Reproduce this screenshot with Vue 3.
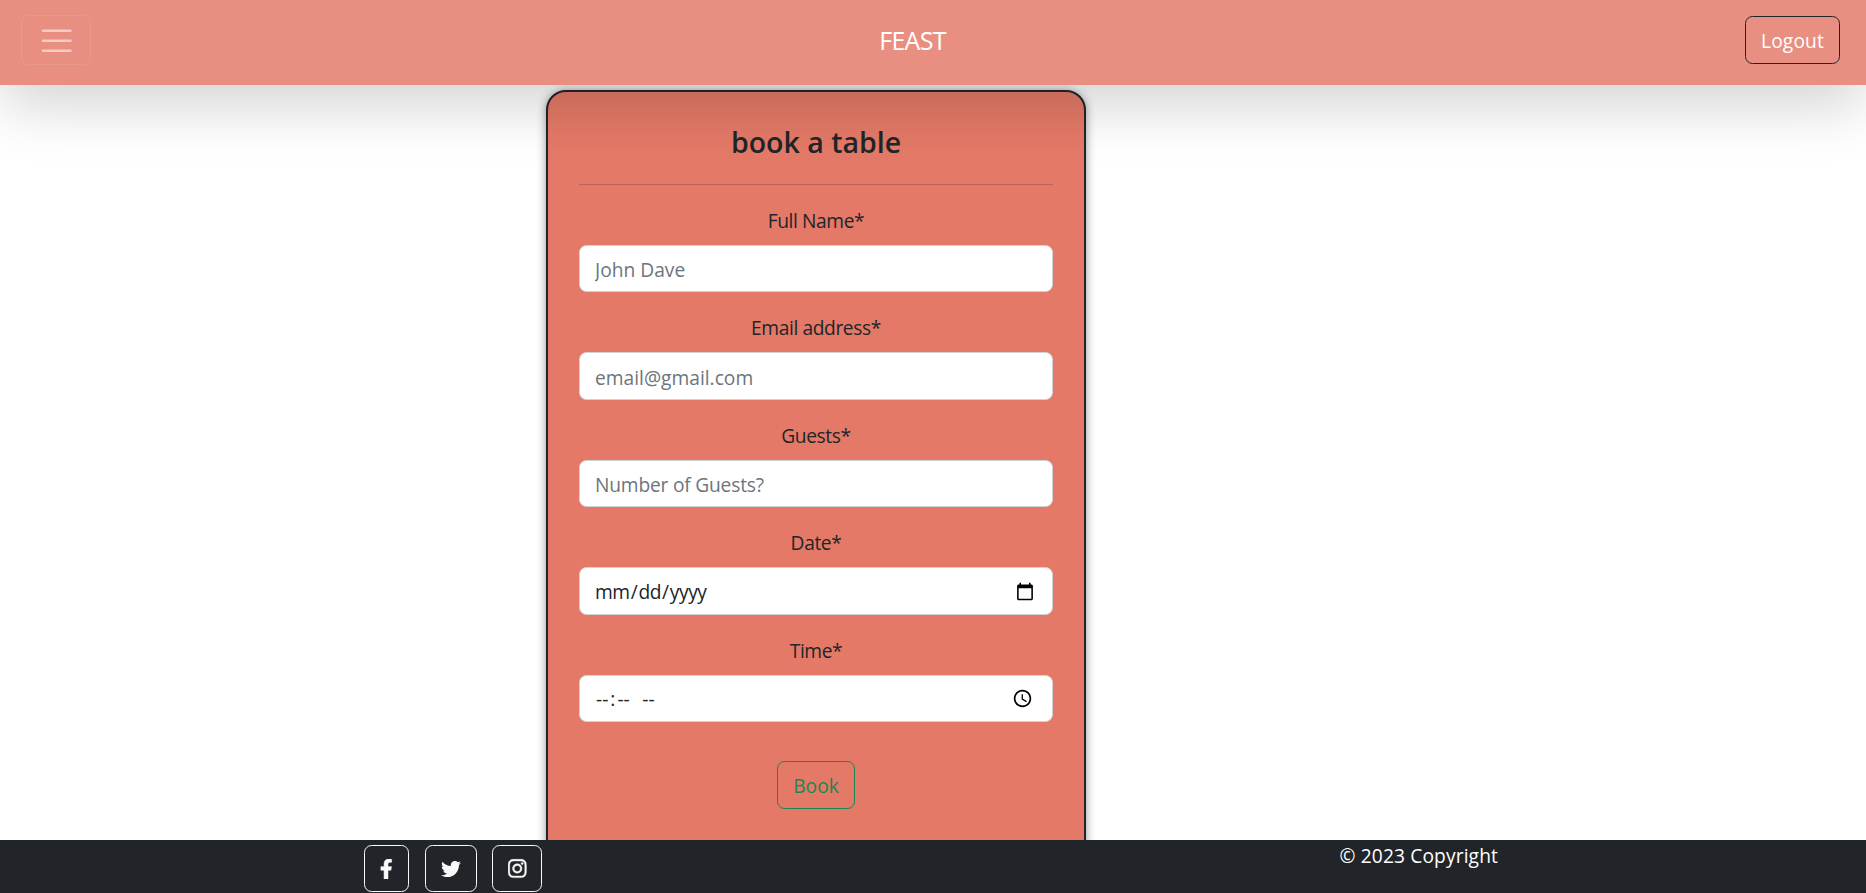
<script setup>
const fields = [
  { id: 'name', label: 'Full Name*', type: 'text', placeholder: 'John Dave' },
  { id: 'email', label: 'Email address*', type: 'email', placeholder: 'email@gmail.com' },
  { id: 'guests', label: 'Guests*', type: 'text', placeholder: 'Number of Guests?' },
  { id: 'date', label: 'Date*', type: 'date' },
  { id: 'time', label: 'Time*', type: 'time' },
]
</script>

<template>
  <div class="page">
    <header class="navbar">
      <button class="toggler" aria-label="Menu">
        <svg viewBox="0 0 30 30" width="37.5" height="37.5">
          <path d="M4 7h22M4 15h22M4 23h22" fill="none" stroke="rgba(255,255,255,.55)" stroke-width="2" stroke-linecap="round" stroke-miterlimit="10" />
        </svg>
      </button>
      <a class="brand">FEAST</a>
      <button class="btn logout">Logout</button>
    </header>

    <main class="main">
      <form class="card" @submit.prevent>
        <h3 class="title">book a table</h3>
        <hr class="rule" />
        <div v-for="f in fields" :key="f.id" class="field">
          <label :for="f.id" class="label">{{ f.label }}</label>
          <input :id="f.id" :class="['control', 'control-' + f.id]" :type="f.type" :placeholder="f.placeholder" />
        </div>
        <button class="btn book">Book</button>
      </form>
    </main>

    <footer class="footer">
      <div class="social">
        <a class="btn icon facebook" aria-label="Facebook">
          <svg viewBox="0 0 320 512" width="12.5" height="20"><path fill="currentColor" stroke="currentColor" stroke-width="14" d="M279.14 288l14.22-92.66h-88.91v-60.13c0-25.35 12.42-50.06 52.24-50.06h40.42V6.26S260.43 0 225.36 0c-73.22 0-121.08 44.38-121.08 124.72v70.62H22.89V288h81.39v224h100.17V288z" /></svg>
        </a>
        <a class="btn icon twitter" aria-label="Twitter">
          <svg viewBox="0 0 512 512" width="20" height="20"><path fill="currentColor" d="M459.37 151.716c.325 4.548.325 9.097.325 13.645 0 138.72-105.583 298.558-298.558 298.558-59.452 0-114.68-17.219-161.137-47.106 8.447.974 16.568 1.299 25.34 1.299 49.055 0 94.213-16.568 130.274-44.832-46.132-.975-84.792-31.188-98.112-72.772 6.498.974 12.995 1.624 19.818 1.624 9.421 0 18.843-1.3 27.614-3.573-48.081-9.747-84.143-51.98-84.143-102.985v-1.299c13.969 7.797 30.214 12.67 47.431 13.319-28.264-18.843-46.781-51.005-46.781-87.391 0-19.492 5.197-37.36 14.294-52.954 51.655 63.675 129.3 105.258 216.365 109.807-1.624-7.797-2.599-15.918-2.599-24.04 0-57.828 46.782-104.934 104.934-104.934 30.213 0 57.502 12.67 76.67 33.137 23.715-4.548 46.456-13.32 66.599-25.34-7.798 24.366-24.366 44.833-46.132 57.827 21.117-2.273 41.584-8.122 60.426-16.243-14.292 20.791-32.161 39.308-52.628 54.253z" /></svg>
        </a>
        <a class="btn icon instagram" aria-label="Instagram">
          <svg viewBox="0 0 448 512" width="18.5" height="21"><path fill="currentColor" stroke="currentColor" stroke-width="10" d="M224.1 141c-63.6 0-114.9 51.3-114.9 114.9s51.3 114.9 114.9 114.9S339 319.500 339 255.900 287.700 141 224.100 141zm0 189.600c-41.100 0-74.700-33.500-74.700-74.700s33.500-74.700 74.700-74.700 74.700 33.500 74.700 74.700-33.600 74.700-74.700 74.700zm146.400-194.300c0 14.900-12 26.800-26.800 26.800-14.900 0-26.800-12-26.800-26.800s12-26.800 26.800-26.800 26.800 12 26.800 26.800zm76.100 27.200c-1.700-35.900-9.900-67.700-36.200-93.900-26.200-26.200-58-34.400-93.900-36.200-37-2.100-147.900-2.100-184.900 0-35.800 1.700-67.600 9.900-93.900 36.100s-34.400 58-36.200 93.900c-2.100 37-2.100 147.900 0 184.900 1.700 35.900 9.900 67.700 36.200 93.900s58 34.400 93.900 36.200c37 2.100 147.900 2.100 184.900 0 35.900-1.700 67.700-9.900 93.900-36.200 26.200-26.200 34.400-58 36.200-93.900 2.100-37 2.100-147.800 0-184.800zM398.800 388c-7.800 19.600-22.900 34.700-42.600 42.600-29.500 11.700-99.500 9-132.100 9s-102.700 2.600-132.100-9c-19.600-7.800-34.700-22.900-42.600-42.600-11.700-29.500-9-99.500-9-132.100s-2.600-102.700 9-132.100c7.800-19.600 22.900-34.700 42.600-42.600 29.500-11.700 99.500-9 132.100-9s102.700-2.600 132.100 9c19.600 7.800 34.700 22.900 42.600 42.600 11.700 29.500 9 99.500 9 132.100s2.700 102.700-9 132.100z" /></svg>
        </a>
      </div>
      <p class="copyright">© 2023 Copyright</p>
    </footer>
  </div>
</template>

<style>
html, body { margin: 0; background: #fff; overflow: hidden; }
</style>

<style scoped>
.page {
  height: 100vh;
  display: grid;
  grid-template-rows: 85px minmax(0, 1fr) 53px;
  overflow: hidden;
  font: 400 19.2px/30px "Open Sans", "Noto Sans", sans-serif;
  color: #212529;
}
.page * { box-sizing: border-box; }
.navbar {
  position: relative;
  z-index: 2;
  display: grid;
  grid-template-columns: 1fr auto 1fr;
  align-items: center;
  padding: 0 26px 5px 21px;
  background: #e88f81;
  box-shadow: 0 20px 60px rgba(0, 0, 0, .175);
}
.toggler {
  display: flex;
  width: 70px;
  height: 50px;
  padding: 5.75px 14px 5.25px 16px;
  background: none;
  border: 1px solid rgba(255, 255, 255, .1);
  border-radius: 7.5px;
}
.toggler svg { flex: none; }
.brand {
  position: relative;
  left: -18px;
  color: #fff;
  font-size: 25px;
  letter-spacing: -.7px;
}
.btn {
  display: flex;
  align-items: center;
  justify-content: center;
  height: 48px;
  padding: 0;
  border: 1px solid;
  border-radius: 7.5px;
  background: none;
  font: inherit;
}
.logout {
  justify-self: end;
  width: 95px;
  padding-top: 2px;
  color: #fff;
  border-color: #212529;
  letter-spacing: .15px;
}
.main {
  min-height: 0;
  padding: 5px 0 0 546px;
}
.card {
  width: 540px;
  height: 800px;
  padding: 28px 31px;
  border: 2px solid #212529;
  border-radius: 20px;
  background: #e47967;
  box-shadow: 0 1px 10px rgba(0, 0, 0, .42);
  text-align: center;
}
.title {
  margin: 0;
  height: 43.8px;
  font-size: 28.5px;
  line-height: 45px;
  font-weight: 600;
}
.rule {
  height: 1px;
  margin: 20px 0;
  border: 0;
  background: #b8645c;
}
.field { margin-bottom: 20px; }
.label {
  display: block;
  height: 30px;
  padding-top: 1px;
  margin-bottom: 10px;
  letter-spacing: -.4px;
}
.control {
  display: block;
  width: 100%;
  height: 47.5px;
  padding: 8.5px 15px 6.5px;
  border: 1px solid #ced4da;
  border-radius: 7.5px;
  background: #fff;
  color: #212529;
  font: inherit;
}
.control::placeholder { color: #6c757d; opacity: 1; }
.control-guests { letter-spacing: -.2px; }
.control-date { padding-left: 14px; letter-spacing: -.4px; }
.control-time { padding-top: 7.5px; padding-bottom: 7.5px; }
.control::-webkit-datetime-edit { padding: 0; }
.control::-webkit-calendar-picker-indicator { width: 20px; height: 20px; }
.control-time::-webkit-calendar-picker-indicator { width: 21px; height: 21px; margin-right: 1px; }
.control-time::-webkit-datetime-edit-minute-field { margin-left: 1px; }
.control-time::-webkit-datetime-edit-hour-field { margin-right: 1px; }
.control-time::-webkit-datetime-edit-ampm-field { margin-left: 8px; }
.book {
  width: 78px;
  margin: 39.2px auto 0;
  padding-top: 2px;
  color: #198754;
  border-color: #198754;
}
.footer {
  position: relative;
  z-index: 3;
  display: flex;
  justify-content: space-between;
  padding: 5px 368px 0 364px;
  background: #212529;
  color: #fff;
}
.social { display: flex; }
.icon { height: 47px; color: #f8f9fa; }
.facebook { width: 45px; margin-right: 16px; }
.twitter { width: 52px; margin-right: 15px; }
.instagram { width: 50px; padding-left: 1px; }
.copyright { margin: -4px 0 0; letter-spacing: .12px; }
</style>
